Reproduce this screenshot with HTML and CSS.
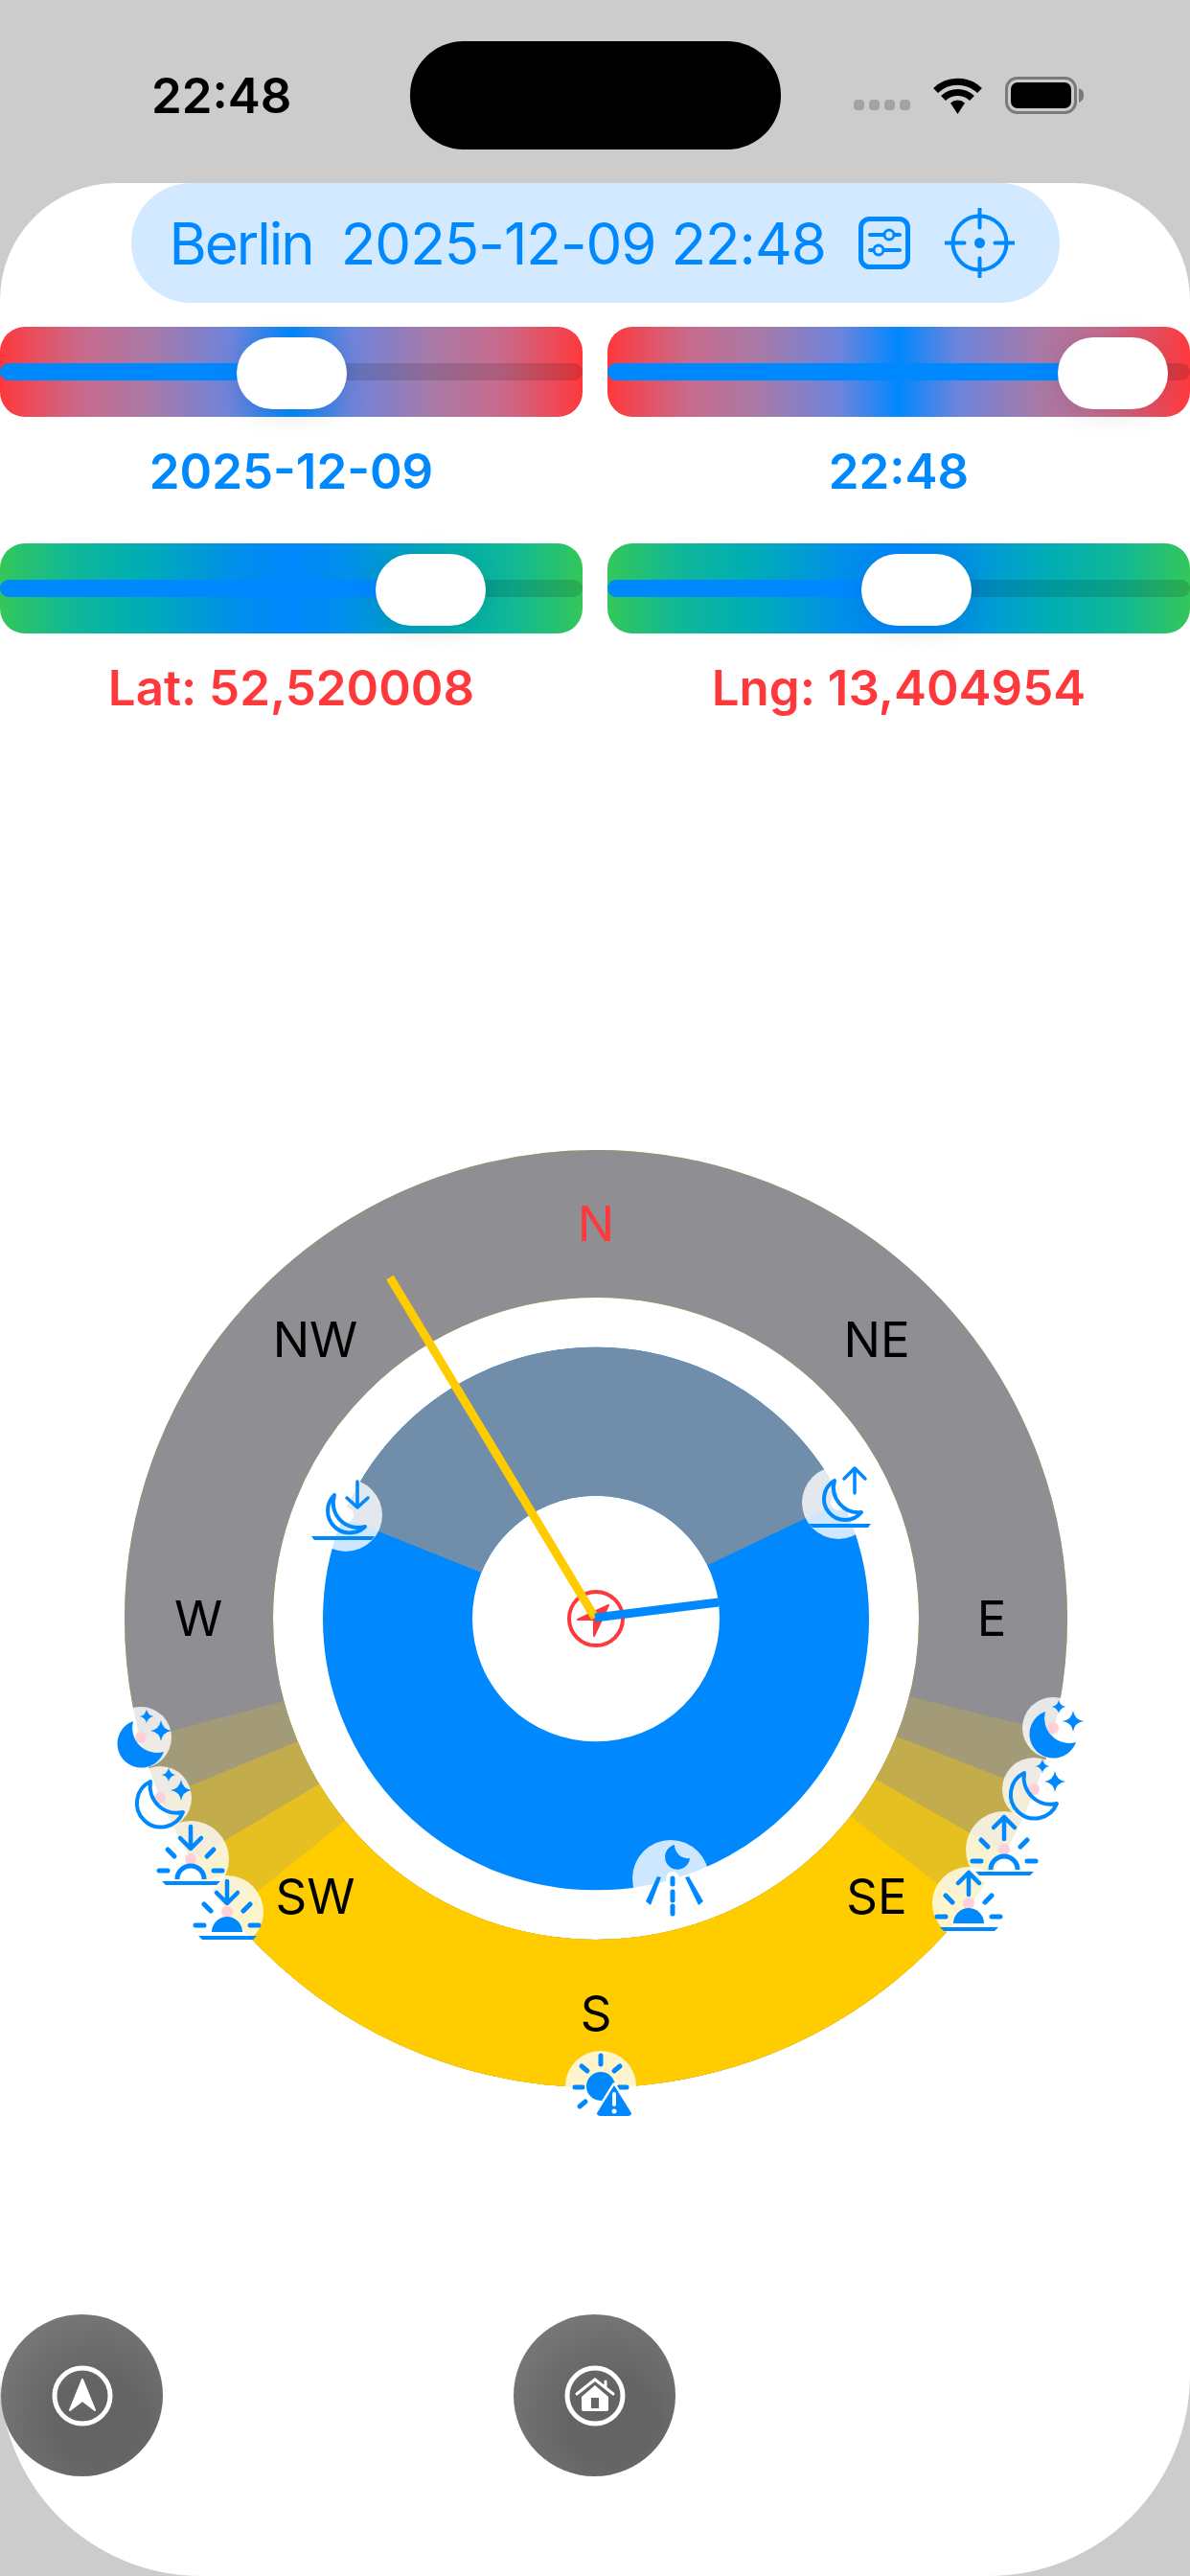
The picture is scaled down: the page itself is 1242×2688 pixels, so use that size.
FILE: index.html
```html
<!DOCTYPE html>
<html>
<head>
<meta charset="utf-8">
<title>Sun and Moon Compass</title>
<link rel="stylesheet" href="styles.css">
</head>
<body>

<div class="status">
	<div class="time">22:48</div>
	<div class="island"></div>
	<div class="signal"><i></i><i></i><i></i><i></i></div>
	<svg class="wifi" width="51" height="38" viewBox="0 0 51 38">
		<path d="M2.5 13.5A33 33 0 0 1 48.500 13.500M10.500 21.500A21.500 21.500 0 0 1 40.500 21.500" fill="none" stroke="#000" stroke-width="7"/>
		<path d="M18 26.500A11 11 0 0 1 33 26.500L25.500 38Z"/>
	</svg>
	<svg class="battery" width="82" height="39" viewBox="0 0 82 39">
		<rect x="1.500" y="1.500" width="72" height="36" rx="11" fill="none" stroke="#7a7a7a" stroke-width="3"/>
		<rect x="6" y="6" width="63" height="27" rx="7"/>
		<path d="M77 12a8 8 0 0 1 0 15Z" fill="#7a7a7a"/>
	</svg>
</div>

<div class="page">
	<div class="pill">
		<span class="city">Berlin</span>
		<span class="stamp">2025-12-09 22:48</span>
		<svg class="tune" width="54" height="55" viewBox="0 0 54 55">
			<rect x="2.500" y="2.500" width="49" height="50" rx="9" fill="none" stroke="#0088ff" stroke-width="5"/>
			<path d="M12 19H43M12 35H43" stroke="#0088ff" stroke-width="4" stroke-linecap="round"/>
			<circle cx="32" cy="19" r="5" fill="#d2e9ff" stroke="#0088ff" stroke-width="3"/>
			<circle cx="21" cy="35" r="5" fill="#d2e9ff" stroke="#0088ff" stroke-width="3"/>
		</svg>
		<svg class="scope" width="73" height="73" viewBox="-36.500 -36.500 73 73">
			<circle r="28" fill="none" stroke="#0088ff" stroke-width="4"/>
			<circle r="5.500" fill="#0088ff"/>
			<path d="M0-36V-16M0 16V36M-36 0H-16M16 0H36" stroke="#0088ff" stroke-width="4" stroke-linecap="round"/>
		</svg>
	</div>

	<div class="controls">
		<div class="control">
			<div class="slider red">
				<div class="track"><div class="fill" style="width:305px"></div></div>
				<div class="thumb" style="left:247px"></div>
			</div>
			<div class="value blue-text">2025-12-09</div>
		</div>
		<div class="control">
			<div class="slider red">
				<div class="track"><div class="fill" style="width:527px"></div></div>
				<div class="thumb" style="left:470px"></div>
			</div>
			<div class="value blue-text">22:48</div>
		</div>
		<div class="control">
			<div class="slider green">
				<div class="track"><div class="fill" style="width:449px"></div></div>
				<div class="thumb" style="left:392px"></div>
			</div>
			<div class="value red-text">Lat: 52,520008</div>
		</div>
		<div class="control">
			<div class="slider green">
				<div class="track"><div class="fill" style="width:322px"></div></div>
				<div class="thumb" style="left:265px"></div>
			</div>
			<div class="value red-text">Lng: 13,404954</div>
		</div>
	</div>

	<svg class="dial" width="1242" height="1160" viewBox="-622 -588 1242 1160">
		<defs>
			<path id="star" d="M0-11Q1.500-1.500 11 0Q1.500 1.500 0 11Q-1.500 1.500-11 0Q-1.500-1.500 0-11Z"/>
			<g id="moonStarsFill">
				<path d="M-8-17A25 25 0 1 0 24 15A26 26 0 0 1-8-17Z" fill="#0088ff"/>
				<use href="#star" x="21" y="-7" fill="#0088ff"/>
				<use href="#star" transform="translate(6 -22) scale(.68)" fill="#0088ff"/>
			</g>
			<g id="moonStarsLine">
				<path d="M-10-17A25 25 0 1 0 24 15A28 28 0 0 1-10-17Z" fill="none" stroke="#0088ff" stroke-width="4" stroke-linejoin="round"/>
				<use href="#star" x="22" y="-8" fill="#0088ff"/>
				<use href="#star" transform="translate(9 -24) scale(.68)" fill="#0088ff"/>
			</g>
			<g id="rays" stroke="#0088ff" stroke-width="5" stroke-linecap="round" fill="none">
				<path d="M-24-8L-17-1M24-8L17-1M-33 14H-24M24 14H33"/>
			</g>
			<path id="horizon" d="M-30 25H31L27 29H-26Z" fill="#0088ff"/>
			<g id="sunsetFill">
				<use href="#rays"/>
				<use href="#horizon"/>
				<path d="M-16 21A16 16 0 0 1 16 21Z" fill="#0088ff"/>
				<path d="M0-32V-9M-11-20L0-9L11-20" fill="none" stroke="#0088ff" stroke-width="4.500" stroke-linecap="round" stroke-linejoin="round"/>
			</g>
			<g id="sunsetLine">
				<use href="#rays" y="-2"/>
				<use href="#horizon" y="-2"/>
				<path d="M-14 21A14 14 0 0 1 14 21" fill="none" stroke="#0088ff" stroke-width="5"/>
				<path d="M0-34V-11M-11-22L0-11L11-22" fill="none" stroke="#0088ff" stroke-width="4.500" stroke-linecap="round" stroke-linejoin="round"/>
			</g>
			<g id="sunriseFill">
				<use href="#rays"/>
				<use href="#horizon"/>
				<path d="M-16 21A16 16 0 0 1 16 21Z" fill="#0088ff"/>
				<path d="M0-9V-32M-11-21L0-32L11-21" fill="none" stroke="#0088ff" stroke-width="4.500" stroke-linecap="round" stroke-linejoin="round"/>
			</g>
			<g id="sunriseLine">
				<use href="#rays" y="-2"/>
				<use href="#horizon" y="-2"/>
				<path d="M-14 21A14 14 0 0 1 14 21" fill="none" stroke="#0088ff" stroke-width="5"/>
				<path d="M0-11V-34M-11-23L0-34L11-23" fill="none" stroke="#0088ff" stroke-width="4.500" stroke-linecap="round" stroke-linejoin="round"/>
			</g>
		</defs>

		<!-- the rings come out slightly flat in height -->
		<g transform="translate(0 1) scale(1 .994)">
			<!-- sun ring: gray night, twilight bands, yellow day -->
			<circle class="ring" r="414.500" stroke="#ffcc00"/>
			<circle class="ring" r="414.500" stroke="#8e8e93"/>
			<circle class="ring" r="414.500" stroke="#a39a78" pathLength="360" stroke-dasharray="151.100 360" transform="rotate(14)"/>
			<circle class="ring" r="414.500" stroke="#c2ac4c" pathLength="360" stroke-dasharray="136 360" transform="rotate(21.500)"/>
			<circle class="ring" r="414.500" stroke="#e6c020" pathLength="360" stroke-dasharray="119 360" transform="rotate(30)"/>
			<circle class="ring" r="414.500" stroke="#ffcc00" pathLength="360" stroke-dasharray="103 360" transform="rotate(38)"/>

			<!-- moon ring -->
			<circle class="moon-ring" r="207" stroke="#0088ff"/>
			<circle class="moon-ring" r="207" stroke="#708daa" pathLength="360" stroke-dasharray="132.300 360" transform="rotate(202)"/>
		</g>

		<text class="dir north" x="0" y="-393">N</text>
		<text class="dir" x="-293" y="-272">NW</text>
		<text class="dir" x="293" y="-272">NE</text>
		<text class="dir" x="-415" y="19">W</text>
		<text class="dir" x="413" y="19">E</text>
		<text class="dir" x="-293" y="309">SW</text>
		<text class="dir" x="293" y="309">SE</text>
		<text class="dir" x="0" y="431">S</text>

		<!-- sun events, left side -->
		<g transform="translate(-385 307)"><circle class="halo" r="38"/><circle class="dot" r="6"/><use href="#sunsetFill"/></g>
		<g transform="translate(-423 252)"><circle class="halo" r="40"/><circle class="dot" r="6"/><use href="#sunsetLine"/></g>
		<g transform="translate(-455 188)"><circle class="halo" r="33"/><circle class="dot" r="6"/><use href="#moonStarsLine"/></g>
		<g transform="translate(-475 125)"><circle class="halo" r="32"/><circle class="dot" r="6"/><use href="#moonStarsFill"/></g>

		<!-- sun events, right side -->
		<g transform="translate(389 298)"><circle class="halo" r="38"/><circle class="dot" r="6"/><use href="#sunriseFill"/></g>
		<g transform="translate(426 242)"><circle class="halo" r="40"/><circle class="dot" r="6"/><use href="#sunriseLine"/></g>
		<g transform="translate(457 179)"><circle class="halo" r="33"/><circle class="dot" r="6"/><use href="#moonStarsLine"/></g>
		<g transform="translate(477 115)"><circle class="halo" r="32"/><circle class="dot" r="6"/><use href="#moonStarsFill"/></g>

		<!-- solar noon -->
		<g transform="translate(5 489)">
			<circle class="halo" r="37"/>
			<circle r="15" fill="#0088ff"/>
			<path d="M0-32V-23M-20-21L-14-16M20-21L14-16M-27 1H-19M19 1H27M-22 21L-16 16" stroke="#0088ff" stroke-width="5" stroke-linecap="round"/>
			<path d="M14-1L32 28Q32 31 28 31H0Q-4 31-4 28Z" fill="#0088ff" stroke="#fff" stroke-width="5" stroke-linejoin="round" paint-order="stroke"/>
			<path d="M14 8V19" stroke="#fff" stroke-width="4" stroke-linecap="round"/>
			<circle cx="14" cy="26" r="2.500" fill="#fff"/>
		</g>

		<!-- moonset -->
		<g transform="translate(-261 -107)">
			<circle class="halo" r="38"/>
			<circle r="8" fill="#fff"/>
			<path d="M-12-21A22 22 0 1 0 20 12A26 26 0 0 1-12-21Z" fill="none" stroke="#0088ff" stroke-width="4" stroke-linejoin="round"/>
			<path d="M12-35V-9M1-18L12-8L23-18" fill="none" stroke="#0088ff" stroke-width="3.500" stroke-linecap="round" stroke-linejoin="round"/>
			<path d="M-36 22H30L27 26H-33Z" fill="#0088ff"/>
		</g>

		<!-- moonrise -->
		<g transform="translate(253 -120)">
			<circle class="halo" r="38"/>
			<circle r="8" fill="#fff"/>
			<path d="M-2-21A22 22 0 1 0 26 12A26 26 0 0 1-2-21Z" transform="translate(-2 -2)" fill="none" stroke="#0088ff" stroke-width="4" stroke-linejoin="round"/>
			<path d="M17-10V-36M6-25L17-36L28-25" fill="none" stroke="#0088ff" stroke-width="3.500" stroke-linecap="round" stroke-linejoin="round"/>
			<path d="M-31 22H34L31 26H-27Z" fill="#0088ff"/>
		</g>

		<!-- moon at the lowest point -->
		<g transform="translate(78 272)">
			<circle class="halo" r="40"/>
			<path d="M4-35A13 13 0 1 0 20-21A14 14 0 0 1 4-35Z" fill="#0088ff"/>
			<path d="M-14-2L-26 24L-21 28L-10-1Z" fill="#0088ff"/>
			<path d="M19-2L34 24L29 28L15-1Z" fill="#0088ff"/>
			<circle cx="2" cy="0" r="7" fill="#fff"/>
			<path d="M2 0V6M2 14V23M2 29V37" stroke="#0088ff" stroke-width="5" stroke-linecap="round"/>
		</g>

		<!-- center compass and hands -->
		<circle cy="1" r="28" fill="none" stroke="#ff383c" stroke-width="4"/>
		<path d="M13-13L-19 2H-2V19Z" fill="#ff383c" stroke="#ff383c" stroke-width="2" stroke-linejoin="round"/>
		<path d="M-1 0L-215-355" stroke="#ffcc00" stroke-width="9"/>
		<path d="M-1 0L128-16" stroke="#0088ff" stroke-width="9"/>
	</svg>

	<div class="buttons">
		<div class="round-btn">
			<svg width="68" height="68" viewBox="-34 -34 68 68">
				<circle r="29" fill="none" stroke="#fff" stroke-width="5"/>
				<path d="M0-17L13 15L0 5L-13 15Z" fill="#fff" stroke="#fff" stroke-width="2" stroke-linejoin="round"/>
			</svg>
		</div>
		<div class="round-btn">
			<svg width="68" height="68" viewBox="-34 -34 68 68">
				<circle r="29" fill="none" stroke="#fff" stroke-width="5"/>
				<path d="M-19-2L0-17L19-2M11-10V-15" fill="none" stroke="#fff" stroke-width="3" stroke-linecap="round"/>
				<path d="M0-11L14 1V14Q14 16 12 16H-12Q-14 16-14 14V1Z" fill="#fff"/>
				<rect x="-4" y="2" width="8" height="11" fill="#666"/>
			</svg>
		</div>
	</div>
</div>

</body>
</html>
```

FILE: styles.css
```css
* {
	box-sizing: border-box;
}
body {
	margin: 0;
	background-color: #cccccc;
	font-family: Inter, "Liberation Sans", sans-serif;
}
svg {
	display: block;
}
.status {
	display: flex;
	align-items: center;
	height: 191px;
	padding: 43px 0 35px 158px;
}
.time {
	width: 143px;
	font-size: 51px;
	font-weight: 600;
	white-space: nowrap;
}
.island {
	width: 387px;
	height: 113px;
	margin-left: 127px;
	border-radius: 56px;
	background-color: black;
}
.signal {
	display: flex;
	gap: 5px;
	margin: 19px 0 0 76px;
}
.signal i {
	width: 11px;
	height: 11px;
	border-radius: 4px;
	background-color: #a3a3a3;
}
.wifi {
	margin-left: 24px;
}
.battery {
	margin-left: 24px;
}
.page {
	height: 2497px;
	background-color: white;
	border-radius: 122px 122px 210px 210px;
}
.pill {
	display: flex;
	align-items: center;
	width: 969px;
	height: 125px;
	margin: 0 auto;
	padding-left: 40px;
	border-radius: 62px;
	background-color: #d2e9ff;
	color: #0088ff;
	font-size: 60px;
	white-space: nowrap;
}
.city {
	letter-spacing: -2px;
}
.stamp {
	margin-left: 29px;
	letter-spacing: -1px;
}
.tune {
	margin-left: 34px;
}
.scope {
	margin-left: 36px;
}
.controls {
	display: grid;
	grid-template-columns: 608px 608px;
	column-gap: 26px;
	row-gap: 44px;
	margin-top: 25px;
}
.slider {
	position: relative;
	display: flex;
	align-items: center;
	height: 94px;
	border-radius: 26px;
}
.slider.red {
	background: linear-gradient(90deg, #ff383c 0, #c86b8c 14%, #a87aa8 26%, #6c84dc 40%, #0088ff 50%, #6c84dc 60%, #a87aa8 74%, #c86b8c 86%, #ff383c 100%);
}
.slider.green {
	background: linear-gradient(90deg, #34c759 0, #10b896 12%, #00aeb4 24%, #0090e8 40%, #0088ff 50%, #0090e8 60%, #00aeb4 76%, #10b896 88%, #34c759 100%);
}
.track {
	width: 100%;
	height: 18px;
	border-radius: 9px;
	background-color: rgba(0,0,0,0.13);
}
.fill {
	height: 18px;
	border-radius: 9px;
	background-color: #0088ff;
}
.thumb {
	position: absolute;
	top: 11px;
	width: 115px;
	height: 75px;
	border-radius: 38px;
	background-color: white;
	box-shadow: 0 4px 30px rgba(0,0,0,0.1);
}
.value {
	height: 62px;
	margin-top: 26px;
	font-size: 51px;
	font-weight: 600;
	line-height: 62px;
	text-align: center;
}
.blue-text {
	color: #0088ff;
}
.red-text {
	color: #ff383c;
}
.dial {
	margin-top: 351px;
}
.ring {
	fill: none;
	stroke-width: 155;
}
.moon-ring {
	fill: none;
	stroke-width: 156;
}
.dir {
	font-size: 51px;
	text-anchor: middle;
}
.north {
	fill: #ff383c;
}
.halo {
	fill: rgba(255,255,255,0.8);
}
.dot {
	fill: #ffd0d8;
}
.buttons {
	display: flex;
	gap: 366px;
	margin-top: 155px;
	padding-left: 1px;
}
.round-btn {
	display: flex;
	align-items: center;
	justify-content: center;
	width: 169px;
	height: 169px;
	border-radius: 50%;
	background: radial-gradient(circle at 60% 65%, #646464 30%, #808080 100%);
}
```
